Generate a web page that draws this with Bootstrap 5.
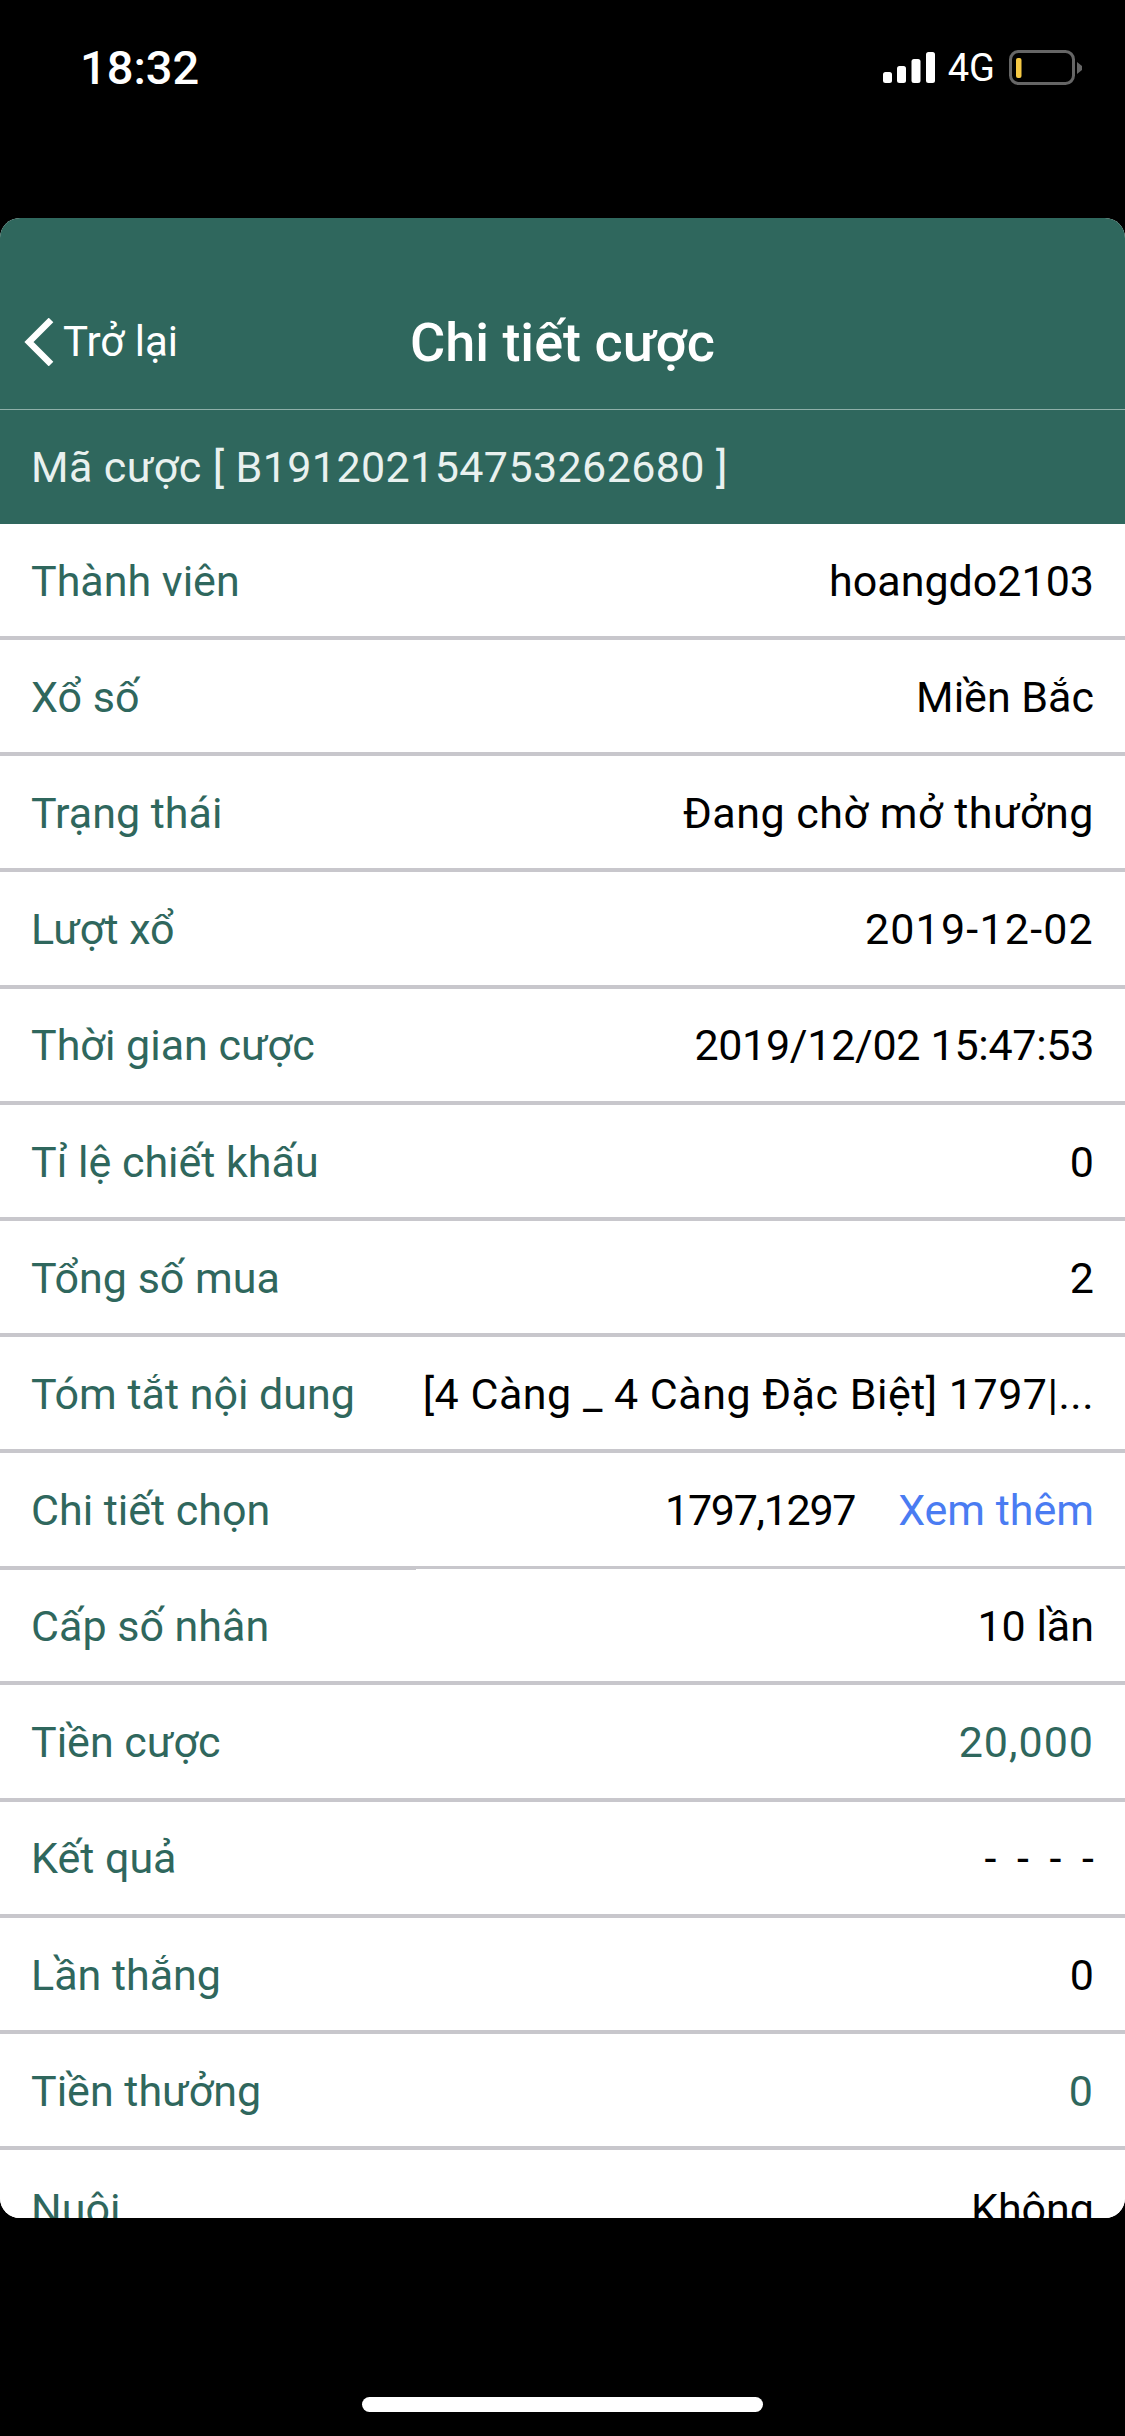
<!DOCTYPE html>
<html lang="vi">
<head>
    <meta charset="UTF-8">
    <meta name="viewport" content="width=device-width, initial-scale=1.0">
    <title>Chi tiết cược</title>
    <link rel="stylesheet" href="https://cdn.jsdelivr.net/npm/bootstrap@5.3.0/dist/css/bootstrap.min.css">
    <style>
        body { background: #000; font-family: Roboto, "Liberation Sans", sans-serif; height: 2436px; overflow: hidden; }
        .status-area { height: 218px; padding: 30px 43px 0 80px; color: #fff; }
        .status-time { font-size: 47px; font-weight: 500; line-height: 76px; }
        .status-net { font-size: 38px; line-height: 36px; margin: 0 14px 0 13px; }
        .status-icons { height: 76px; }
        .sheet { height: 2000px; border-radius: 20px; overflow: hidden; background: #fff; }
        .sheet-head { background: #2f675d; color: #fff; }
        .head-nav { height: 192px; padding-top: 94px; border-bottom: 1px solid #8fb0a9; position: relative; }
        .head-back { color: #fff; text-decoration: none; font-size: 42px; line-height: 60px; padding-left: 24px; gap: 9px; }
        .head-title { position: absolute; left: 0; right: 0; top: 90px; font-size: 54px; font-weight: 500; line-height: 70px; text-align: center; margin: 0; }
        .head-code { height: 114px; padding-left: 31px; font-size: 43px; letter-spacing: .4px; color: #e9f1ef; }
        .list-group-flush > .detail-row { height: 116.15px; padding: 2px 31px 0; border: 0; border-bottom: 4px solid #c8c7cc; font-size: 43px; color: #000; position: relative; }
        .detail-label { color: #2f675d; }
        .detail-money { color: #2f675d; letter-spacing: 1px; }
        .detail-more { color: #4a7cf2; text-decoration: none; margin-left: 43px; letter-spacing: 0; }
        .detail-tight { letter-spacing: -1.3px; }
        .detail-date { letter-spacing: -.3px; }
        .detail-wide { letter-spacing: .5px; }
        .detail-wider { letter-spacing: 1.2px; }
        .detail-dash { word-spacing: 10px; }
        .list-group-flush > .detail-split { border-bottom-width: 3px; z-index: 1; }
        .detail-split::after { content: ""; position: absolute; left: 0; bottom: -4px; width: 416px; height: 4px; background: #c8c7cc; }
        .home-area { height: 218px; padding-top: 179px; }
        .home-bar { width: 401px; height: 15px; border-radius: 8px; background: #fff; }
    </style>
</head>
<body>
    <div class="status-area d-flex justify-content-between align-items-start">
        <span class="status-time">18:32</span>
        <div class="status-icons d-flex align-items-center">
            <svg width="52" height="32" viewBox="0 0 52 32">
                <rect x="0" y="20" width="9" height="11" rx="2.5" fill="#fff"/>
                <rect x="14" y="14" width="9" height="17" rx="2.5" fill="#fff"/>
                <rect x="28.500" y="7" width="9" height="24" rx="2.5" fill="#fff"/>
                <rect x="43" y="0" width="9" height="31" rx="2.5" fill="#fff"/>
            </svg>
            <span class="status-net">4G</span>
            <svg width="73" height="36" viewBox="0 0 73 36">
                <rect x="1.500" y="1.500" width="63" height="32" rx="8" fill="none" stroke="#666" stroke-width="3"/>
                <rect x="7" y="8" width="5.500" height="20" rx="2" fill="#f6c944"/>
                <path d="M68 12 L73 16 V20 L68 24 Z" fill="#666"/>
            </svg>
        </div>
    </div>

    <div class="sheet">
        <div class="sheet-head">
            <div class="head-nav">
                <a href="#" class="head-back d-inline-flex align-items-center">
                    <svg width="30" height="48" viewBox="0 0 30 48">
                        <path d="M27 2 L5 24 L27 46" fill="none" stroke="#fff" stroke-width="6.500"/>
                    </svg>
                    Trở lại
                </a>
                <h1 class="head-title">Chi tiết cược</h1>
            </div>
            <div class="head-code d-flex align-items-center">Mã cược [ B191202154753262680 ]</div>
        </div>
        <ul class="list-group list-group-flush" id="detail-list"></ul>
    </div>

    <div class="home-area d-flex justify-content-center align-items-start">
        <div class="home-bar"></div>
    </div>

    <script>
        const rows = [
            ['Thành viên', 'hoangdo2103'],
            ['Xổ số', 'Miền Bắc'],
            ['Trạng thái', 'Đang chờ mở thưởng', 'detail-wide'],
            ['Lượt xổ', '2019-12-02', 'detail-wider'],
            ['Thời gian cược', '2019/12/02 15:47:53', 'detail-date'],
            ['Tỉ lệ chiết khấu', '0'],
            ['Tổng số mua', '2'],
            ['Tóm tắt nội dung', '[4 Càng _ 4 Càng Đặc Biệt] 1797|...', 'detail-wide'],
            ['Chi tiết chọn', '1797,1297', 'detail-tight', true],
            ['Cấp số nhân', '10 lần'],
            ['Tiền cược', '20,000', 'detail-money'],
            ['Kết quả', '- - - -', 'detail-dash'],
            ['Lần thắng', '0'],
            ['Tiền thưởng', '0', 'detail-money'],
            ['Nuôi', 'Không']
        ];

        // Dựng danh sách chi tiết
        const list = document.getElementById('detail-list');
        rows.forEach(([label, value, valueClass, hasMore]) => {
            const li = document.createElement('li');
            li.className = 'list-group-item detail-row d-flex justify-content-between align-items-center';
            if (hasMore) li.classList.add('detail-split');

            const name = document.createElement('span');
            name.className = 'detail-label';
            name.textContent = label;
            li.appendChild(name);

            const val = document.createElement('span');
            val.textContent = value;
            if (valueClass) val.className = valueClass;
            if (hasMore) {
                const more = document.createElement('a');
                more.href = '#';
                more.className = 'detail-more';
                more.textContent = 'Xem thêm';
                val.appendChild(more);
            }
            li.appendChild(val);
            list.appendChild(li);
        });
    </script>
    <script src="https://cdn.jsdelivr.net/npm/bootstrap@5.3.0/dist/js/bootstrap.bundle.min.js"></script>
</body>
</html>
